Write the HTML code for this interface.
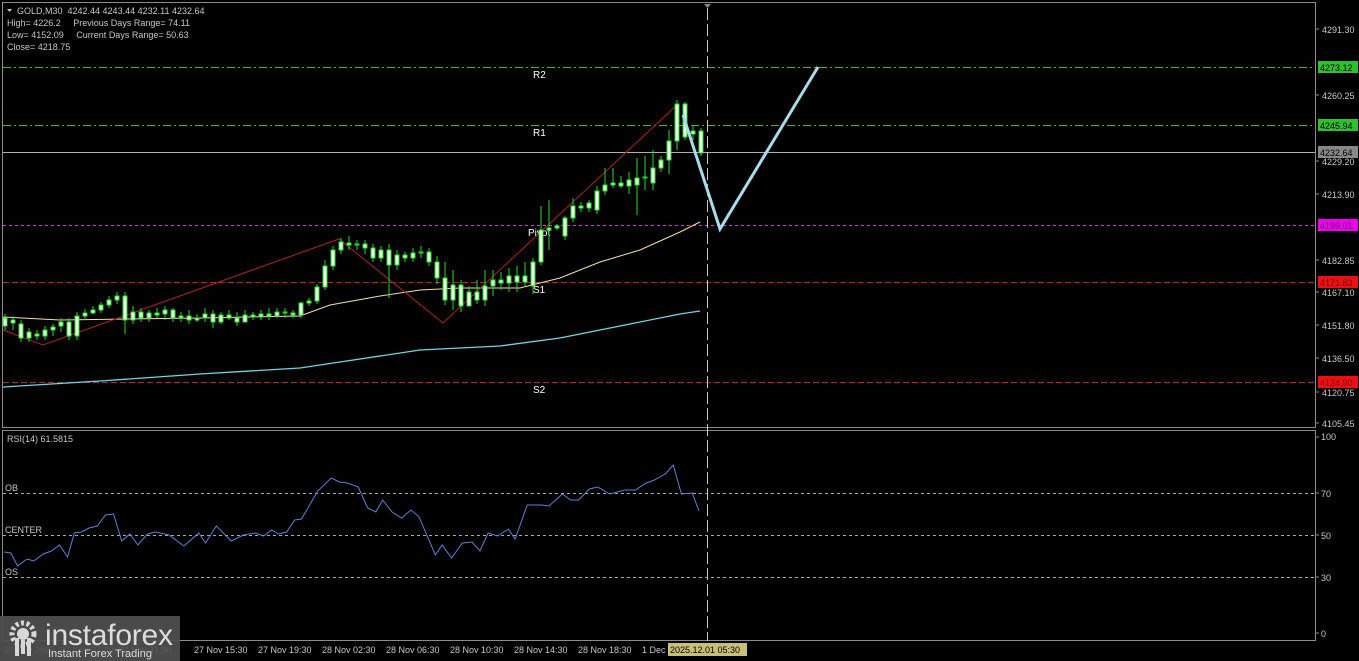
<!DOCTYPE html>
<html><head><meta charset="utf-8"><style>
html,body{margin:0;padding:0;background:#000;width:1359px;height:661px;overflow:hidden}
svg{display:block}
text{font-family:"Liberation Sans",sans-serif;white-space:pre}
</style></head><body>
<svg width="1359" height="661" viewBox="0 0 1359 661" xmlns="http://www.w3.org/2000/svg">
<rect width="1359" height="661" fill="#000"/>
<rect x="2.5" y="2.5" width="1313" height="425" fill="none" stroke="#8c8c8c"/>
<rect x="2.5" y="430.5" width="1313" height="210" fill="none" stroke="#8c8c8c"/>
<g stroke-width="1" fill="none">
<line x1="3" y1="67.5" x2="1315" y2="67.5" stroke="#3cb83c" stroke-dasharray="8,3,2,3"/>
<line x1="3" y1="125.5" x2="1315" y2="125.5" stroke="#3cb83c" stroke-dasharray="8,3,2,3"/>
<line x1="3" y1="152.5" x2="1315" y2="152.5" stroke="#b0b0b0"/>
<line x1="3" y1="225.5" x2="1315" y2="225.5" stroke="#c040d0" stroke-dasharray="3,3"/>
<line x1="3" y1="282.5" x2="1315" y2="282.5" stroke="#c82020" stroke-dasharray="6,3"/>
<line x1="3" y1="382.5" x2="1315" y2="382.5" stroke="#c82020" stroke-dasharray="6,3"/>
</g>
<g fill="#fff" font-size="10">
<text x="533" y="78">R2</text><text x="533" y="136">R1</text><text x="528" y="236">Pivot</text><text x="533" y="293">S1</text><text x="533" y="393">S2</text>
</g>
<polyline fill="none" stroke="#f5e0a0" stroke-width="1" points="3,317 60,320 200,318 300,316 330,305 380,296 420,290 460,288 520,288 560,278 600,262 640,250 680,232 700,222"/>
<polyline fill="none" stroke="#6fd6e0" stroke-width="1.3" points="3,387 100,381 200,374 300,368 340,362 420,350 500,346 560,338 620,326 680,314 700,311"/>
<polyline fill="none" stroke="#b02020" stroke-width="1" points="3,330 43,345 339,239 443,323 678,104"/>
<g stroke="#22dd22" stroke-width="1" fill="#e8ffe8">
<path d="M5,314V330M13,316V330M21,320V342M29,328V342M37,330V340M45,326V340M53,324V336M61,318V332M69,318V340M77,312V340M85,309V320M93,306V314M101,302V313M109,296V308M117,292V304M125,292V334M133,306V324M141,308V322M149,310V322M157,308V318M165,306V320M173,308V322M181,312V322M189,310V324M197,314V322M205,308V322M213,310V328M221,312V324M229,310V320M237,312V326M245,310V322M253,312V320M261,310V320M269,308V320M277,308V318M285,308V318M293,310V318M301,302V318M309,298V306M317,284V304M325,260V290M333,246V270M341,238V254M349,236V250M357,240V250M365,240V254M373,244V262M381,246V262M389,244V298M397,250V270M405,252V262M413,248V262M421,246V258M429,248V266M437,256V284M445,262V305M453,270V310M461,280V312M469,286V306M477,280V304M485,270V306M493,270V296M501,272V290M509,268V292M517,266V292M525,262V286M533,258V294M541,206V265M549,200V250M557,224V230M565,216V240M573,198V222M581,202V212M589,200V212M597,186V214M605,168V195M613,168V188M621,176V188M629,172V194M637,158V215M645,156V190M653,150V190M661,156V172M669,130V174M677,100V150M685,102V140M693,126V140M701,128V156"/>
<rect x="3" y="318" width="4" height="8"/><rect x="11" y="320" width="4" height="3"/><rect x="19" y="324" width="4" height="14"/><rect x="27" y="332" width="4" height="6"/><rect x="35" y="334" width="4" height="2"/><rect x="43" y="330" width="4" height="6"/><rect x="51" y="327" width="4" height="3"/><rect x="59" y="322" width="4" height="4"/><rect x="67" y="322" width="4" height="14"/><rect x="75" y="316" width="4" height="20"/><rect x="83" y="313" width="4" height="3"/><rect x="91" y="310" width="4" height="3"/><rect x="99" y="305" width="4" height="5"/><rect x="107" y="300" width="4" height="5"/><rect x="115" y="296" width="4" height="4"/><rect x="123" y="296" width="4" height="24"/><rect x="131" y="312" width="4" height="8"/><rect x="139" y="312" width="4" height="6"/><rect x="147" y="313" width="4" height="5"/><rect x="155" y="313" width="4" height="2"/><rect x="163" y="310" width="4" height="4"/><rect x="171" y="310" width="4" height="8"/><rect x="179" y="316" width="4" height="2"/><rect x="187" y="316" width="4" height="4"/><rect x="195" y="318" width="4" height="2"/><rect x="203" y="314" width="4" height="4"/><rect x="211" y="314" width="4" height="8"/><rect x="219" y="315" width="4" height="7"/><rect x="227" y="315" width="4" height="3"/><rect x="235" y="318" width="4" height="4"/><rect x="243" y="315" width="4" height="7"/><rect x="251" y="315" width="4" height="2"/><rect x="259" y="314" width="4" height="3"/><rect x="267" y="314" width="4" height="2"/><rect x="275" y="312" width="4" height="4"/><rect x="283" y="312" width="4" height="1"/><rect x="291" y="313" width="4" height="2"/><rect x="299" y="303" width="4" height="12"/><rect x="307" y="301" width="4" height="2"/><rect x="315" y="287" width="4" height="14"/><rect x="323" y="266" width="4" height="21"/><rect x="331" y="250" width="4" height="16"/><rect x="339" y="242" width="4" height="8"/><rect x="347" y="243" width="4" height="2"/><rect x="355" y="244" width="4" height="1"/><rect x="363" y="244" width="4" height="4"/><rect x="371" y="248" width="4" height="10"/><rect x="379" y="250" width="4" height="8"/><rect x="387" y="250" width="4" height="15"/><rect x="395" y="255" width="4" height="10"/><rect x="403" y="255" width="4" height="3"/><rect x="411" y="253" width="4" height="5"/><rect x="419" y="252" width="4" height="1"/><rect x="427" y="252" width="4" height="10"/><rect x="435" y="262" width="4" height="16"/><rect x="443" y="278" width="4" height="22"/><rect x="451" y="285" width="4" height="15"/><rect x="459" y="285" width="4" height="21"/><rect x="467" y="292" width="4" height="14"/><rect x="475" y="292" width="4" height="8"/><rect x="483" y="286" width="4" height="14"/><rect x="491" y="280" width="4" height="6"/><rect x="499" y="280" width="4" height="3"/><rect x="507" y="276" width="4" height="7"/><rect x="515" y="276" width="4" height="6"/><rect x="523" y="276" width="4" height="6"/><rect x="531" y="262" width="4" height="24"/><rect x="539" y="230" width="4" height="32"/><rect x="547" y="228" width="4" height="2"/><rect x="555" y="226" width="4" height="2"/><rect x="563" y="218" width="4" height="18"/><rect x="571" y="206" width="4" height="12"/><rect x="579" y="206" width="4" height="2"/><rect x="587" y="203" width="4" height="5"/><rect x="595" y="191" width="4" height="19"/><rect x="603" y="185" width="4" height="6"/><rect x="611" y="183" width="4" height="2"/><rect x="619" y="183" width="4" height="3"/><rect x="627" y="180" width="4" height="6"/><rect x="635" y="178" width="4" height="7"/><rect x="643" y="177" width="4" height="1"/><rect x="651" y="168" width="4" height="15"/><rect x="659" y="160" width="4" height="8"/><rect x="667" y="141" width="4" height="19"/><rect x="675" y="104" width="4" height="37"/><rect x="683" y="104" width="4" height="33"/><rect x="691" y="131" width="4" height="3"/><rect x="699" y="131" width="4" height="22"/>
</g>
<polyline fill="none" stroke="#a8dcea" stroke-width="3" points="683,115 720,229 818,67"/>
<line x1="707.5" y1="8" x2="707.5" y2="641" stroke="#c8c8c8" stroke-dasharray="12,4"/>
<path d="M704,4h7l-3.5,4z" fill="#888"/>
<g fill="#c8c8c8" font-size="9">
<path d="M7,9h5l-2.5,3z" fill="#c8c8c8"/>
<text x="17" y="14">GOLD,M30  4242.44 4243.44 4232.11 4232.64</text>
<text x="7" y="26">High= 4226.2     Previous Days Range= 74.11</text>
<text x="7" y="38">Low= 4152.09     Current Days Range= 50.63</text>
<text x="7" y="50">Close= 4218.75</text>
</g>
<g fill="#c8c8c8" font-size="9">
<text x="1322" y="33">4291.30</text><text x="1322" y="99">4260.25</text><text x="1322" y="165">4229.20</text><text x="1322" y="198">4213.90</text><text x="1322" y="264">4182.85</text><text x="1322" y="296">4167.10</text><text x="1322" y="329">4151.80</text><text x="1322" y="362">4136.50</text><text x="1322" y="396">4120.75</text><text x="1322" y="427">4105.45</text>
</g>
<g stroke="#8c8c8c"><path d="M1316,29h3M1316,95h3M1316,161h3M1316,194h3M1316,260h3M1316,292h3M1316,325h3M1316,358h3M1316,392h3M1316,423h3M1316,437h3M1316,493h3M1316,535h3M1316,577h3M1316,633h3"/></g>
<rect x="1318" y="61" width="40" height="12" fill="#2fc02f"/><text x="1320" y="71" font-size="9" fill="#000">4273.12</text>
<rect x="1318" y="119" width="40" height="12" fill="#2fc02f"/><text x="1320" y="129" font-size="9" fill="#000">4245.94</text>
<rect x="1318" y="146" width="40" height="12" fill="#888"/><text x="1320" y="156" font-size="9" fill="#000">4232.64</text>
<rect x="1318" y="219" width="40" height="12" fill="#ee00ee"/><text x="1320" y="229" font-size="9" fill="#600060">4199.01</text>
<rect x="1318" y="276" width="40" height="12" fill="#ee1010"/><text x="1320" y="286" font-size="9" fill="#700">4171.83</text>
<rect x="1318" y="376" width="40" height="12" fill="#ee1010"/><text x="1320" y="386" font-size="9" fill="#700">4124.90</text>
<g stroke="#aaa" stroke-dasharray="3,3"><line x1="3" y1="493.5" x2="1315" y2="493.5"/><line x1="3" y1="535.5" x2="1315" y2="535.5"/><line x1="3" y1="577.5" x2="1315" y2="577.5"/></g>
<g fill="#c8c8c8" font-size="9">
<text x="7" y="442">RSI(14) 61.5815</text><text x="5" y="491">OB</text><text x="5" y="533">CENTER</text><text x="5" y="575">OS</text>
<text x="1321" y="440">100</text><text x="1321" y="497">70</text><text x="1321" y="539">50</text><text x="1321" y="581">30</text><text x="1321" y="637">0</text>
</g>
<g transform="scale(1.352,1)"><polyline fill="none" stroke="#5b82d8" stroke-width="1" vector-effect="non-scaling-stroke" points="3,552 8,553 13,566 20,559 25,561 32,554 38,551 44,545 50,557 55,533 60,532 66,528 72,526 78,515 84,514 90,541 96,534 102,545 109,534 115,532 125,535 136,546 147,533 152,543 160,526 171,541 180,535 189,533 195,536 201,530 206,534 212,532 218,520 223,519 235,491 245,478 251,482 257,483 265,487 272,508 278,512 283,500 290,512 297,518 304,510 310,517 322,555 327,545 334,558 342,543 349,542 355,551 361,533 368,536 376,529 381,539 390,505 401,505 406,506 416,494 422,500 428,500 436,489 442,487 451,494 462,490 470,490 478,483 484,480 492,474 498,465 504,494 512,493 517,511"/></g>
<g fill="#c8c8c8" font-size="9">
<text x="4" y="653">27 Nov 2025  27 Nov 07:30  27 Nov 11:30</text>
<text x="194" y="653">27 Nov 15:30</text><text x="258" y="653">27 Nov 19:30</text><text x="322" y="653">28 Nov 02:30</text><text x="386" y="653">28 Nov 06:30</text><text x="450" y="653">28 Nov 10:30</text><text x="514" y="653">28 Nov 14:30</text><text x="578" y="653">28 Nov 18:30</text><text x="642" y="653">1 Dec</text>
</g>
<rect x="668" y="643" width="79" height="13" fill="#c8c078"/>
<text x="670" y="653" font-size="9" fill="#000">2025.12.01 05:30</text>
<rect x="0" y="616" width="180" height="45" fill="#505050" opacity="0.92"/>
<g fill="#d8d8d8">
<circle cx="23" cy="634" r="11" fill="none" stroke="#d8d8d8" stroke-width="5" stroke-dasharray="3,2.5"/>
<circle cx="23" cy="634" r="6"/>
<rect x="15" y="638" width="4" height="18"/><rect x="27" y="638" width="4" height="18"/><rect x="21" y="640" width="4" height="14"/>
</g>
<text x="45" y="645" font-size="30" fill="#dcdcdc" textLength="128">instaforex</text>
<text x="48" y="657" font-size="11" fill="#dcdcdc">Instant Forex Trading</text>
</svg>
</body></html>
